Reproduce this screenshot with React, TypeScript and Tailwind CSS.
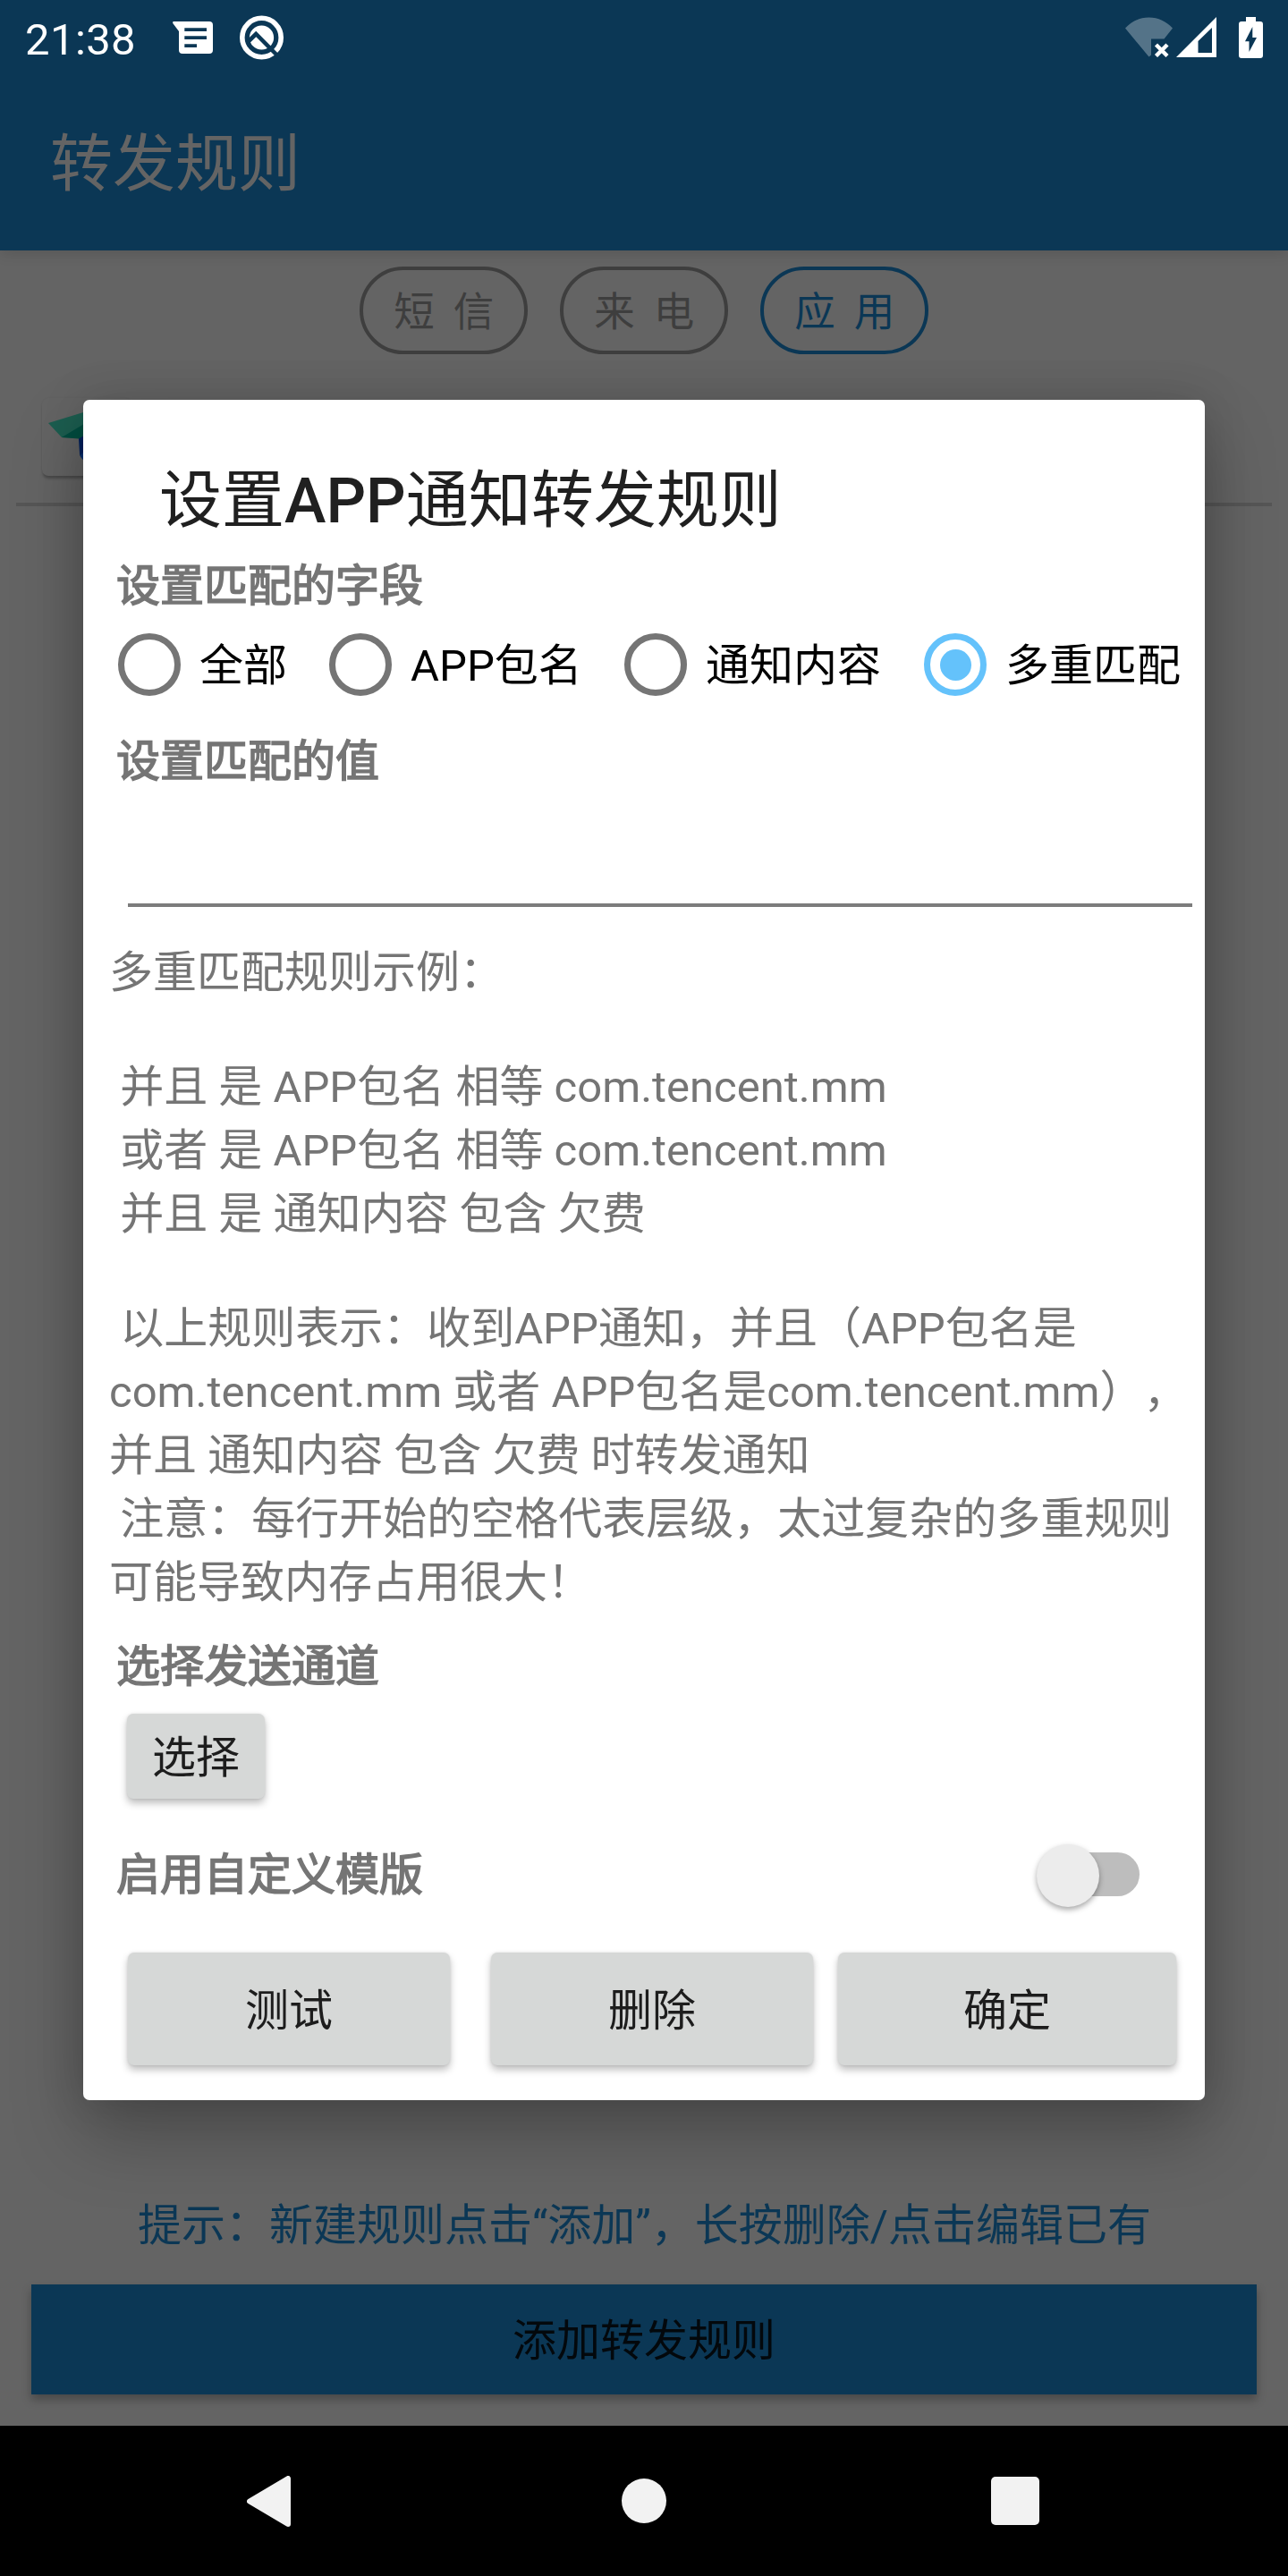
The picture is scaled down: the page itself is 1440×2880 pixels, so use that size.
import React from "react";

const FONT = "font-['Roboto','Noto_Sans_CJK_SC',sans-serif] [text-spacing-trim:space-all]";

function StatusBar() {
  return (
    <div className="flex h-[84px] items-start justify-between pl-7 pr-7 text-white">
      <div className="flex">
        <span className="mt-4 w-[124px] text-[49px] leading-[58px] tracking-[0.4px]">21:38</span>
        <svg className="ml-[41px] mt-[24px]" width="45" height="36" viewBox="0 0 45 36">
          <path
            fill="white"
            fillRule="evenodd"
            d="M1.5 0H41a4 4 0 0 1 4 4V32a4 4 0 0 1-4 4H11a4 4 0 0 1-4-4V11L.6 2.6C-.2 1.300 0 0 1.500 0ZM13.300 7.300V11H38V7.300ZM13.300 16.300V20H38V16.300ZM13.300 25.300V29H27V25.300Z"
          />
        </svg>
        <svg className="ml-[30px] mt-[17px]" width="50" height="50" viewBox="0 0 50 50">
          <circle cx="24.500" cy="25" r="21.700" fill="none" stroke="white" strokeWidth="5.600" />
          <circle cx="24.500" cy="25" r="13.600" fill="white" />
          <path d="M8.500 30.500 18.200 21 45 48" fill="none" stroke="#0b3755" strokeWidth="4.600" />
        </svg>
      </div>
      <div className="flex pt-[19px]">
        <svg width="53" height="45" viewBox="0 0 53 45">
          <path fill="#fff" fillOpacity=".3" d="M0 12.500C7 5 16 .5 26.500 .5S46 5 53 12.500L43.500 24.500H29V42.500L26.500 44.500Z" />
          <path d="M34.500 31 47 43.500M47 31 34.500 43.500" stroke="white" strokeWidth="4.400" />
        </svg>
        <svg className="ml-1" width="45" height="45" viewBox="0 0 45 45">
          <path fill="white" fillRule="evenodd" d="M45 0V45H0ZM40 12 24.500 27V40H40Z" />
        </svg>
        <svg className="ml-[25px]" width="27" height="46" viewBox="0 0 27 46">
          <path
            fill="white"
            fillRule="evenodd"
            d="M8 0H19V5H24a3 3 0 0 1 3 3V43a3 3 0 0 1-3 3H3a3 3 0 0 1-3-3V8a3 3 0 0 1 3-3H8ZM15.300 11 7 27.300H11.500V39L20 23H15.300Z"
          />
        </svg>
      </div>
    </div>
  );
}

function Chip({ text, active }: { text: string; active?: boolean }) {
  return (
    <div
      className={
        "flex h-[98px] w-[188px] items-center justify-center whitespace-pre rounded-full border-4 text-[45.5px] leading-none tracking-[-0.5px] " +
        (active ? "border-[#0b3755] text-[#0b3755]" : "border-[#3e3e3e] text-[#3e3e3e]")
      }
    >
      <span className="mt-1.5">{text}</span>
    </div>
  );
}

function AppIcon() {
  return (
    <svg width="84" height="70" viewBox="0 0 84 70">
      <path d="M1 19 68 -1.500 60 26 40 36 16 35Z" fill="#1c5e50" />
      <path d="M16 35 66 5 60 36 35 36.500Z" fill="#004d40" />
      <path d="M35 36.500 60 22 66 47 50 61 40 59Q36 57 36 53Z" fill="#00205c" />
      <path d="M37 55 50 41 60 57 46 63Q38 61 37 55Z" fill="#0a3170" />
    </svg>
  );
}

function Radio({ text, checked, className }: { text: string; checked?: boolean; className: string }) {
  return (
    <div className={"flex shrink-0 items-center " + className}>
      <div
        className={
          "flex size-[70px] shrink-0 items-center justify-center rounded-full border-[7px] " +
          (checked ? "border-[#64c2fb]" : "border-[#757575]")
        }
      >
        {checked && <div className="size-[35px] rounded-full bg-[#64c2fb]" />}
      </div>
      <span className="ml-[21px] mt-1 whitespace-nowrap text-[49px] leading-[58px] text-black">{text}</span>
    </div>
  );
}

function Label({ children, className = "" }: { children: string; className?: string }) {
  return (
    <div
      className={
        "h-[58px] pl-[37px] text-[49px] leading-[58px] text-[#757575] [-webkit-text-stroke:1.6px_#757575] " +
        className
      }
    >
      {children}
    </div>
  );
}

function Button({ children, className }: { children: string; className: string }) {
  return (
    <button
      className={
        "flex items-center justify-center rounded-[7px] bg-[#d6d8d7] text-[49px] leading-[58px] text-[#1d1d1d] shadow-[0_5px_8px_rgba(0,0,0,0.26),0_0_3px_rgba(0,0,0,0.1)] " +
        className
      }
    >
      <span className="mt-[5px]">{children}</span>
    </button>
  );
}

function Dialog() {
  return (
    <div className="h-[1901px] w-[1254px] rounded-[7px] bg-white pt-[72px] shadow-[0_40px_80px_rgba(0,0,0,0.25),0_0_50px_rgba(0,0,0,0.14)]">
      <h2 className="pl-[85px] text-[70px] font-normal leading-[82px] text-[#202020]">
        设置<span className="font-medium">APP</span>通知转发规则
      </h2>

      <Label className="mt-[26px]">设置匹配的字段</Label>
      <div className="flex h-[116px] pl-[39px]">
        <Radio className="w-[236px]" text="全部" />
        <Radio className="w-[330px]" text="APP包名" />
        <Radio className="w-[335px]" text="通知内容" />
        <Radio className="w-[300px]" text="多重匹配" checked />
      </div>

      <Label className="mt-[22px]">设置匹配的值</Label>
      <div className="ml-[50px] mr-[14px] h-[133px] border-b-4 border-[#7c7c7c]" />

      <div className="mt-[38px] whitespace-pre pl-[29px] text-[49px] leading-[71px] text-[#757575]">
        <p>多重匹配规则示例：</p>
        <div className="py-[57px]">
          <p>{" 并且 是 APP包名 相等 com.tencent.mm"}</p>
          <p>{" 或者 是 APP包名 相等 com.tencent.mm"}</p>
          <p>{" 并且 是 通知内容 包含 欠费"}</p>
        </div>
        <p>{" 以上规则表示：收到APP通知，并且（APP包名是"}</p>
        <p>com.tencent.mm 或者 APP包名是com.tencent.mm），</p>
        <p>并且 通知内容 包含 欠费 时转发通知</p>
        <p>{" 注意：每行开始的空格代表层级，太过复杂的多重规则"}</p>
        <p>可能导致内存占用很大！</p>
      </div>

      <Label className="mt-[30px]">选择发送通道</Label>
      <Button className="ml-[49px] mt-[23px] h-[95px] w-[154px]">选择</Button>

      <div className="mt-[51px] flex h-[70px] items-center justify-between pr-[73px]">
        <Label>启用自定义模版</Label>
        <div className="mb-1 flex h-[49px] w-[108px] items-center rounded-full bg-[#bdbdbd]">
          <div className="-ml-[7px] mt-[3px] size-[70px] shrink-0 rounded-full bg-[#ececec] shadow-[0_3px_6px_rgba(0,0,0,0.35)]" />
        </div>
      </div>

      <div className="mt-[51px] flex pl-[50px]">
        <Button className="h-[126px] w-[360px]">测试</Button>
        <Button className="ml-[46px] h-[126px] w-[360px]">删除</Button>
        <Button className="ml-[28px] h-[126px] w-[378px]">确定</Button>
      </div>
    </div>
  );
}

function NavBar() {
  return (
    <div className="flex h-[168px] items-center bg-black pl-[276px]">
      <svg width="49" height="57" viewBox="0 0 49 57">
        <path
          d="M3 28.500 46 3V54Z"
          fill="#f2f2f2"
          stroke="#f2f2f2"
          strokeWidth="6"
          strokeLinejoin="round"
        />
      </svg>
      <div className="ml-[370px] size-[50px] rounded-full bg-[#f2f2f2]" />
      <div className="ml-[363px] size-[54px] rounded-[5px] bg-[#f2f2f2]" />
    </div>
  );
}

export default function App() {
  return (
    <div className={"relative flex h-[2880px] w-[1440px] flex-col overflow-hidden bg-[#646464] " + FONT}>
      <header className="h-[280px] bg-[#0b3755] shadow-[0_4px_14px_rgba(0,0,0,0.12)]">
        <StatusBar />
        <h1 className="mt-[59px] pl-14 text-[70px] leading-[82px] text-[#646464]">转发规则</h1>
      </header>

      <div className="mt-[18px] flex justify-center gap-9">
        <Chip text="短  信" />
        <Chip text="来  电" />
        <Chip text="应  用" active />
      </div>

      <div className="mx-[18px] mt-[49px] h-[121px] border-b-4 border-[#565656]">
        <div className="ml-[29px] flex h-[87px] w-[100px] items-center rounded-[7px] pl-1.5 shadow-[0_4px_3px_-1px_rgba(0,0,0,0.25),0_0_2px_rgba(0,0,0,0.08)]">
          <AppIcon />
        </div>
      </div>

      <div className="flex-1" />
      <p className="mb-[36px] whitespace-nowrap pl-px text-center text-[49px] leading-[58px] text-[#0b3755]">
        提示：新建规则点击“添加”，长按删除/点击编辑已有
      </p>
      <button className="mx-[35px] mb-[35px] flex h-[123px] items-center justify-center bg-[#0b3755] text-[49px] leading-[58px] text-[#03080c] shadow-[0_6px_10px_rgba(0,0,0,0.28)]">
        <span className="mt-1">添加转发规则</span>
      </button>
      <NavBar />

      <div className="absolute left-[93px] top-[447px]">
        <Dialog />
      </div>
    </div>
  );
}
